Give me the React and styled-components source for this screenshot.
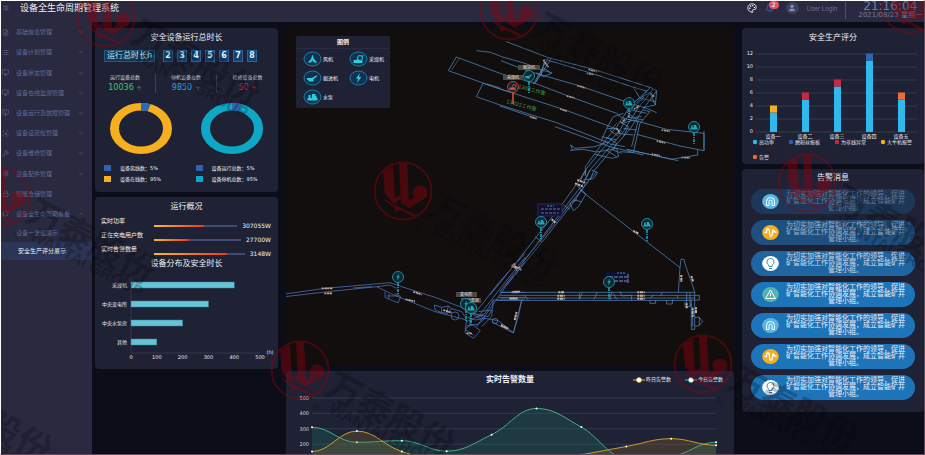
import React from "react";
import styled, { createGlobalStyle } from "styled-components";
import {
  FileSearch, List, Monitor, MonitorDot, MonitorCheck, ScanSearch, Wrench, Settings, Lock,
  RefreshCw, ChevronDown, ChevronUp, Palette, Bell, User, Menu,
} from "lucide-react";

const cjk = '"DejaVu Sans", "Noto Sans CJK SC", sans-serif';

const GlobalStyle = createGlobalStyle`
  * { box-sizing: border-box; }
  body { margin: 0; background: #0b0d18; font-family: ${cjk}; color: #f2f2f6; }
  button { border: 0; background: none; padding: 0; margin: 0; color: inherit; font: inherit; cursor: pointer; }
  a { color: inherit; text-decoration: none; }
  ul, dl, dd, h1, h2, p { margin: 0; padding: 0; font-weight: 400; }
  ul { list-style: none; }
  svg { display: block; }
  svg text { font-family: ${cjk}; }
`;

const Page = styled.div`
  position: relative;
  height: 100vh;
  overflow: hidden;
  display: flex;
  flex-direction: column;
  background: #0b0d18;
  border: 1px solid #fff;
  border-right-color: #5e4b5c;
  border-bottom-color: #5e4b5c;
`;

/* ---------- top bar ---------- */
const TopBar = styled.header`
  display: flex;
  align-items: flex-start;
  justify-content: space-between;
  flex: none;
  height: 21px;
  padding: 0 2px;
  background: #292a3f;
`;
const Brand = styled.div`
  display: flex;
  align-items: center;
  gap: 11px;
  height: 14px;
  color: #7b7f9c;
`;
const BrandTitle = styled.h1`
  font-size: 9px;
  line-height: 14px;
  color: #f0f0f5;
`;
const Tools = styled.div`
  display: flex;
  align-items: flex-start;
  height: 18px;
`;
const ToolButton = styled.button`
  position: relative;
  display: grid;
  place-items: center;
  width: 10px;
  height: 14px;
  margin-right: 8px;
  color: ${(p) => p.$color};
`;
const Badge = styled.span`
  position: absolute;
  top: 0;
  right: -4px;
  width: 10px;
  height: 8px;
  border-radius: 4px;
  background: #e0526e;
  color: #fff;
  font-size: 6px;
  line-height: 8px;
  text-align: center;
`;
const Account = styled.button`
  display: flex;
  align-items: center;
  gap: 8px;
  height: 14px;
  margin-left: 3px;
  color: #6d7191;
  font-size: 6px;
  font-family: Inter, sans-serif;
`;
const Avatar = styled.span`
  display: grid;
  place-items: center;
  width: 13px;
  height: 12px;
  border-radius: 50%;
  background: #3b4160;
  color: #8d93b0;
`;
const Clock = styled.time`
  margin-left: 8px;
  padding-left: 12px;
  height: 18px;
  border-left: 1px solid #4a4e6c;
  color: #6f7aa8;
  font-size: 7px;
  line-height: 8px;
  text-align: center;
`;
const ClockTime = styled.span`
  display: block;
  font-size: 12px;
  line-height: 10px;
`;

/* ---------- frame ---------- */
const Body = styled.div`
  display: flex;
  flex: 1;
  min-height: 0;
`;
const Sidebar = styled.nav`
  flex: none;
  width: 91px;
  background: #292a3f;
`;
const MenuList = styled.ul`
  display: flex;
  flex-direction: column;
  height: 202px;
`;
const MenuItem = styled.li`
  flex: 1;
  display: flex;
`;
const MenuButton = styled.button`
  display: grid;
  grid-template-columns: 14px 1fr 6px;
  align-items: center;
  width: 100%;
  padding: 0 8px 0 1px;
  text-align: left;
  white-space: nowrap;
  font-size: 6px;
  line-height: 8px;
  color: #656b93;
`;
const SubLink = styled.a`
  display: block;
  padding-left: ${(p) => (p.$active ? "17px" : "15px")};
  font-size: 6px;
  line-height: 18px;
  white-space: nowrap;
  color: ${(p) => (p.$active ? "#f4f4f8" : "#656b93")};
  background: ${(p) => (p.$active ? "#2c3556" : "transparent")};
`;
const Content = styled.main`
  flex: 1;
  min-width: 0;
  display: grid;
  grid-template-columns: 183fr 448fr 182fr;
  align-items: start;
  gap: 8px;
  padding: 6px 0 0 3px;
`;
const Column = styled.div`
  display: flex;
  flex-direction: column;
  gap: 5px;
  min-width: 0;
`;
const Card = styled.section`
  position: relative;
  padding: ${(p) => p.$pad || "5px 0 6px"};
  border-radius: 4px;
  background: #1f2235;
`;
const CardTitle = styled.h2`
  font-size: 8px;
  line-height: 10px;
  text-align: center;
  font-weight: ${(p) => (p.$bold ? 700 : 400)};
`;
const Drawing = styled.svg`
  width: 100%;
  height: auto;
`;

/* ---------- running time card ---------- */
const CounterRow = styled.div`
  display: flex;
  align-items: center;
  gap: 4px;
  padding: 7px 8px 0 9px;
`;
const CounterLabel = styled.span`
  margin-right: 4px;
  padding: 0 2px;
  border: 1px solid #25587e;
  background: #16365a;
  color: #b9ecf5;
  font-size: 8px;
  line-height: 10px;
  white-space: nowrap;
`;
const Digit = styled.span`
  width: 10px;
  border: 1px solid #28659a;
  background: #17406f;
  color: #d7f6fb;
  font-size: 8px;
  font-weight: 700;
  line-height: 10px;
  text-align: center;
`;
const Stats = styled.dl`
  display: grid;
  grid-template-columns: repeat(3, 1fr);
  margin-top: 12px;
`;
const Stat = styled.div`
  height: 19px;
  text-align: center;
  border-right: ${(p) => (p.$last ? "0" : "1px solid #3c4058")};
`;
const StatLabel = styled.dt`
  font-size: 5px;
  line-height: 6px;
  color: #d5d6de;
`;
const StatValue = styled.dd`
  margin-top: 3px;
  font-size: 8px;
  line-height: 10px;
  color: ${(p) => p.$color};
`;
const Unit = styled.small`
  font-size: 5px;
  margin-left: 3px;
`;
const Donuts = styled.div`
  display: grid;
  grid-template-columns: 1fr 1fr;
  padding-top: 10px;
`;
const DonutCell = styled.div`
  display: flex;
  flex-direction: column;
  align-items: center;
`;
const Ring = styled.svg`
  width: 62px;
  height: 51px;
`;
const Legend = styled.ul`
  align-self: stretch;
  margin-top: 8px;
  padding-left: 9px;
`;
const LegendItem = styled.li`
  display: flex;
  align-items: center;
  gap: 9px;
  height: 11px;
  font-size: 5px;
  white-space: nowrap;
`;
const Swatch = styled.span`
  width: 7px;
  height: 6px;
  background: ${(p) => p.$color};
`;

/* ---------- overview card ---------- */
const Meters = styled.div`
  padding: 5px 7px 0 6px;
`;
const Meter = styled.div`
  display: grid;
  grid-template-columns: 53px 1fr auto;
  column-gap: 0;
  height: 14px;
  font-size: 6px;
  line-height: 8px;
`;
const MeterLabel = styled.span`
  white-space: nowrap;
`;
const MeterTrack = styled.span`
  height: 2px;
  margin: 8px 5px 0 0;
  background: linear-gradient(90deg, #f3bd2a, #ee3a14) 0 0 / ${(p) => p.$fill}% 100% no-repeat #414c77;
`;
const MeterValue = styled.span`
  padding-top: 5px;
`;

/* ---------- map ---------- */
const MapPanel = styled.section`
  position: relative;
  background: #120e0d;
`;
const MapLegend = styled.div`
  position: absolute;
  left: 10px;
  top: 8px;
  width: 94px;
  padding-bottom: 2px;
  border-radius: 2px;
  background: #1f2235;
`;
const MapLegendTitle = styled.h2`
  font-size: 6px;
  font-weight: 700;
  line-height: 12px;
  text-align: center;
  border-bottom: 1px solid #292c42;
`;
const MapLegendGrid = styled.ul`
  display: grid;
  grid-template-columns: 46px 1fr;
  grid-auto-rows: 19px;
  padding-left: 7px;
`;
const MapLegendItem = styled.li`
  display: flex;
  align-items: center;
  gap: 1px;
  font-size: 5px;
  white-space: nowrap;
`;
const GlyphSvg = styled.svg`
  width: 19px;
  height: 16px;
  flex: none;
`;

/* ---------- alarms ---------- */
const AlarmList = styled.ul`
  display: flex;
  flex-direction: column;
  gap: 6px;
  padding: 6px 9px 0;
`;
const Alarm = styled.li`
  display: grid;
  grid-template-columns: 17px 119px;
  align-items: center;
  column-gap: 7px;
  height: 25px;
  padding-left: 11px;
  border-radius: 13px;
  background: rgba(30, 116, 185, ${(p) => p.$strength});
`;
const AlarmText = styled.p`
  font-size: 7px;
  line-height: 7px;
  text-align: center;
  color: rgba(235, 240, 248, ${(p) => p.$strength});
`;
const AlarmIcon = styled.svg`
  width: 17px;
  height: 15px;
`;

const Watermark = styled.svg`
  position: absolute;
  left: 0;
  top: 0;
  width: 100vw;
  pointer-events: none;
`;

const menu = [
  ["基础信息管理", FileSearch, 1], ["设备计划管理", List, 1], ["设备状态管理", Monitor, 1],
  ["设备在线监测管理", MonitorDot, 1], ["设备运行及故障管理", MonitorCheck, 1],
  ["设备设定检管理", ScanSearch, 1], ["设备维修管理", Wrench, 1], ["设备配件管理", Settings, 1],
  ["智能仓储管理", Lock, 0], ["设备全生命周期看板", RefreshCw, 2],
];

function Donut({ color, items }) {
  return (
    <DonutCell>
      <Ring viewBox="0 0 62 62" preserveAspectRatio="none" role="img" aria-label={items[1]}>
        <circle cx="31" cy="31" r="26.5" fill="none" stroke={color} strokeWidth="9" />
        <circle cx="31" cy="31" r="26.5" fill="none" stroke="#2a69b4" strokeWidth="9"
          pathLength="100" strokeDasharray="5 95" transform="rotate(-90 31 31)" />
      </Ring>
      <Legend>
        <LegendItem><Swatch $color="#3461ae" />{items[0]}</LegendItem>
        <LegendItem><Swatch $color={color} />{items[1]}</LegendItem>
      </Legend>
    </DonutCell>
  );
}

function RunTimeCard() {
  return (
    <Card $pad="5px 0 8px">
      <CardTitle>安全设备运行总时长</CardTitle>
      <CounterRow>
        <CounterLabel>运行总时长h</CounterLabel>
        {"2345678".split("").map((d) => <Digit key={d}>{d}</Digit>)}
      </CounterRow>
      <Stats>
        <Stat><StatLabel>运行设备总数</StatLabel><StatValue $color="#43c46f">10036<Unit>个</Unit></StatValue></Stat>
        <Stat><StatLabel>停机设备总数</StatLabel><StatValue $color="#2b9fe0">9850<Unit>个</Unit></StatValue></Stat>
        <Stat $last><StatLabel>检修设备总数</StatLabel><StatValue $color="#c62a45">50<Unit>个</Unit></StatValue></Stat>
      </Stats>
      <Donuts>
        <Donut color="#f5af1f" items={["设备离线数：5%", "设备在线数：95%"]} />
        <Donut color="#0ea8c6" items={["设备运行总数：5%", "设备停机总数：95%"]} />
      </Donuts>
    </Card>
  );
}

const distribution = [["采煤机", 400], ["中央变电所", 300], ["中央水泵房", 200], ["其他", 100]];

function OverviewCard() {
  return (
    <Card $pad="5px 0 6px">
      <CardTitle>运行概况</CardTitle>
      <Meters>
        {[["实时功率", 60, "307055W"], ["正在充电用户数", 40, "27700W"], ["实时告警数量", 80, "3148W"]].map(([l, f, v]) => (
          <Meter key={l}>
            <MeterLabel>{l}</MeterLabel><MeterTrack $fill={f} /><MeterValue>{v}</MeterValue>
          </Meter>
        ))}
      </Meters>
      <CardTitle>设备分布及安全时长</CardTitle>
      <Drawing viewBox="0 0 183 94" role="img" aria-label="设备分布及安全时长">
        <path d="M36 7V84H165" fill="none" stroke="#34374a" />
        {distribution.map(([name, v], i) => (
          <g key={name}>
            <text x="32" y={18 + i * 19} fontSize="5" fill="#e6e6ec" textAnchor="end">{name}</text>
            <rect x="36" y={13 + i * 19} width={(v / 500) * 129} height="6" fill="#65c5d8" stroke="#3c8592" strokeWidth=".5" />
          </g>
        ))}
        {[0, 100, 200, 300, 400, 500].map((v) => (
          <text key={v} x={36 + (v / 500) * 129} y="90" fontSize="5" fill="#e6e6ec" textAnchor="middle">{v}</text>
        ))}
        <text x="175" y="85" fontSize="5" fill="#e6e6ec" textAnchor="middle">(h)</text>
      </Drawing>
    </Card>
  );
}

/* Equipment symbols, drawn around 0,0 in an 18 x 14 field. */
function Symbol({ kind }) {
  switch (kind) {
    case "fan":
      return <path d="M0-4.500L1.500 0L5 3.500H1.500L0 1.500L-1.500 3.500H-5L-1.500 0Z" />;
    case "cutter":
      return <g><path d="M-5 1L0 .5L2 2L4 1V4H-5Z" /><circle cx="1.500" cy="-1" r="2.500" fill="none" stroke="currentColor" /><path d="M3-2L5-4" stroke="currentColor" /></g>;
    case "digger":
      return <path d="M-5.500 0H-1L5-3L4-1L1 1V3.500H-4V2H-5.500Z" />;
    case "bolt":
      return <path d="M1.500-5L-2.500 .5H-.3L-1.500 5L2.800-1H.5Z" />;
    default:
      return <path d="M-5 3.500V1H-4V-2H-2V1H-.5V-3H3V-1H4V1H5V3.500Z" />;
  }
}

function MapGlyph({ kind }) {
  return (
    <GlyphSvg viewBox="-9.500 -8 19 16" aria-hidden="true">
      <ellipse rx="8.500" ry="7" fill="#123150" stroke="#1c7fa5" />
      <g fill="#27d0dd" color="#27d0dd"><Symbol kind={kind} /></g>
    </GlyphSvg>
  );
}

function Pin({ x, y, kind, color = "#20a9bd" }) {
  return (
    <g transform={`translate(${x} ${y})`}>
      <path d="M0 6V17" stroke={color} strokeWidth="1.500" strokeDasharray={kind === "cutter" ? "none" : "3 1 1 1"} />
      <circle r="5.500" fill="#0d2833" stroke={color} strokeWidth=".8" />
      <g fill={color} color={color} transform="scale(.7)"><Symbol kind={kind} /></g>
    </g>
  );
}

const tagText = { fontSize: 4, fill: "#e6e0dc", textAnchor: "middle" };

function MineMap() {
  return (
    <Drawing viewBox="286 28 448 338" role="img" aria-label="巷道图">
      <g fill="none" stroke="#4f8cc4" strokeLinejoin="round" strokeWidth="2.200">
        {/* upper working faces */}
        <g transform="translate(500 20) scale(.33333)">
          <path d="M19 65L145 113L280 148L390 183L455 204L470 212L466 255L430 262" />
          <path d="M145 121L275 160L410 205L440 213M-70 92L-28 97L5 110L75 130L125 150L155 158" />
          <path d="M3 122L80 152L240 198L385 248L440 265L470 278" />
          <path d="M-155 152L-131 111L0 160L105 190L210 230L350 280L365 293L412 305" />
          <path d="M-155 152L0 207L190 268L310 312L365 333" />
          <path d="M-71 230L-51 190L-20 200L30 216M-71 230L0 255L170 308L330 370M165 320L330 380L430 405M0 258L100 292" />
          <path d="M-40 191L0 203M-145 150L-122 115" stroke="#57626b" />
          <path d="M145 113L100 192M152 118L108 186M135 117L122 168M105 190L130 144L155 160L130 170L108 158" />
          <path d="M450 203L400 260L360 330L305 390L258 448L242 480M460 207L410 270L370 335L318 394L270 450L255 480M470 212L428 270L388 330L330 395L280 455L270 480M440 213L390 260L350 320L300 380L256 440V465" />
          <path d="M402 205L420 235L466 245M410 240L450 218L466 255M395 270L440 280M387 292L430 300M370 325L410 330M350 340L400 345M330 372L375 380M318 390L350 410M305 350L350 360M410 252L432 232" />
          <path d="M430 270L450 275L420 310L400 398L360 395M415 300L395 380M340 290L320 325L303 365M340 290L370 280M320 325L355 327" />
          <path d="M375 308L400 300L500 328L612 340V392L540 378L410 343M612 333V392M593 390V405L515 418L380 388M380 388L535 422" />
          <path d="M212 375L225 385L285 380L325 365M210 391L250 388L290 396L350 385L356 410L335 415L285 403M212 375L218 391" />
          <path d="M320 352L350 370L338 390L365 400M360 305L385 320L370 350M380 275L400 292L425 290M355 348L330 332L350 310" />
          <g stroke="#a8998e" strokeWidth="5" strokeDasharray="5 2 8 1">
            <path d="M265 148L290 155M260 160L282 164M232 197L256 204M200 228L224 234M180 267L202 274M90 290L110 296M485 330L510 334M470 363L496 369M455 402L480 407M545 412L570 414M130 120L145 142M402 267L418 258M350 325L360 340M365 310L374 298M452 220L462 230" />
          </g>
        </g>
        {/* diagonal roadway and lower right faces */}
        <g transform="translate(500 170) scale(.33333)" stroke="#5388c2">
          <path d="M257 0L235 35L190 98L45 282L-30 375M270 0L250 40L200 105L62 285L0 365M290 5L258 40L220 98L135 205L20 345M265 35L220 90L160 165L70 275M258 0L255 18M275 0L293 8L280 26L250 30" />
          <path d="M232 48L258 72L235 110L220 122L210 100L232 88M220 90L245 95M105 200L125 215M155 145L170 158M190 105L210 118" />
          <path d="M240 60L405 188L540 293L543 268L552 268L556 285L584 365M540 293L535 367" />
          <path d="M0 367H585M0 376H582M0 384H585M-10 391H574M65 391L40 489L-25 455" />
          <path d="M584 365V478H574V390H598V376H584M450 391V400H467V390M500 391V402H517V388M555 395V410H572V400M585 442H598L608 455L595 468H585M598 442V468" />
          <path d="M72 375L85 390M238 370V388L247 367M282 388L292 367M335 365L330 390M360 365L365 378L395 376V390M340 370L350 388M450 384L462 375M480 376L490 367M530 376L535 385M560 367V410M570 367V410M578 410V470" />
          <g stroke="#c3b4a8" strokeWidth="6" strokeDasharray="6 2 9 2">
            <path d="M35 367H56M28 385H52M175 367H194M172 377H194M172 386H194M412 367H434M412 377H434M412 386H434M225 40L250 50M232 30L255 38M35 290L62 295M42 280L50 302M400 183L415 190M155 148L165 158M544 315V336M574 318L580 336M560 400V415M588 412V430M3 465L22 474M44 450L50 425M578 415V440" />
          </g>
        </g>
        {/* lower left roadway */}
        <g transform="translate(285 170) scale(.33333)" stroke="#5079c4">
          <path d="M0 372L120 355L315 338L350 350L450 382L530 412L565 430M0 380L120 366L275 350L320 372L450 425L545 450M275 350L315 345L335 355M205 354L260 350" />
          <path d="M300 365V382L325 393L340 398L347 380L330 370M305 378H340M312 372V386" />
          <path d="M448 405L470 412L490 408L500 416L488 430L470 428L450 420ZM470 412V428M490 408L485 430M500 416L530 425L540 440" />
          <circle cx="510" cy="438" r="12" /><circle cx="630" cy="453" r="8" />
          <path d="M545 450L540 488L565 505L586 482L560 462L540 478L565 495M545 468L580 462L600 445L570 450L545 440M560 430L610 440L620 420L580 425M530 412L600 445L640 452L685 488L700 440L710 391" />
          <path d="M570 430L640 340L720 250M580 440L650 350L720 262M595 445L665 345L720 275M600 430L625 390H720M625 390L620 440L590 470M640 382H720M650 367H720M548 425L590 448L575 470M545 455L600 430M555 440V465" />
          <g stroke="#b8aaa2" strokeWidth="5" strokeDasharray="6 2 8 1">
            <path d="M110 355H142M118 370H143M385 365L410 374M362 388L390 394M475 420L500 428M545 490H560M650 468L670 476M680 285L710 300M685 365H705M675 386H700" />
          </g>
        </g>
      </g>
      {/* data boxes beside the pins */}
      <g>
        <rect x="538" y="204" width="24" height="12" fill="#10112f" stroke="#282a58" />
        <path d="M541 209H560M541 213H559" stroke="#696c91" strokeDasharray="3 1" />
        <path d="M547 206H554" stroke="#2698c0" strokeDasharray="2 1" />
        <rect x="606" y="272" width="23" height="11" fill="#10112f" />
        <path d="M609 277H627M609 281H627M628 274V283" stroke="#8c86a8" strokeDasharray="4 1" />
        <path d="M617 273H626" stroke="#2698c0" strokeDasharray="2 1" />
      </g>
      <g fill="#4b4846">
        <rect x="518" y="65" width="22" height="5" /><rect x="503" y="75" width="20" height="5" />
        <rect x="456" y="292" width="21" height="5" /><rect x="461" y="298" width="20" height="5" />
      </g>
      <text x="529" y="69" {...tagText}>掘进机</text>
      <text x="513" y="79" {...tagText}>采煤机</text>
      <text x="466" y="296" {...tagText}>变电所</text>
      <text x="473" y="302" {...tagText}>水泵房</text>
      <g fill="#3f9d4c" fontSize="5">
        <text x="518" y="88" transform="rotate(15 518 88)">1302工作面</text>
        <text x="506" y="103" transform="rotate(15 506 103)">13022工作面</text>
      </g>
      <Pin x={529} y={76} kind="digger" />
      <Pin x={513} y={87} kind="cutter" color="#e0523c" />
      <Pin x={629} y={103} kind="pump" />
      <Pin x={694} y={127} kind="pump" />
      <Pin x={541} y={222} kind="pump" />
      <Pin x={647} y={224} kind="pump" />
      <Pin x={609} y={282} kind="bolt" />
      <Pin x={398} y={277} kind="bolt" />
      <Pin x={466} y={304} kind="bolt" />
      <Pin x={471} y={308} kind="pump" />
    </Drawing>
  );
}

const yesterday = [152, 285, 152, 95, 80, 85, 132, 185, 236, 193];
const today = [310, 212, 223, 155, 262, 432, 311, 112, 118, 213];

function smooth(values) {
  const pts = values.map((v, i) => [26 + i * 44.9, 86 - v * 0.154]);
  let d = `M${pts[0]}`;
  for (let i = 0; i < pts.length - 1; i++) {
    const [a, b, c, e] = [pts[i - 1] || pts[i], pts[i], pts[i + 1], pts[i + 2] || pts[i + 1]];
    const flatB = (b[1] - a[1]) * (c[1] - b[1]) <= 0 ? 0 : (c[1] - a[1]) / 5;
    const flatC = (c[1] - b[1]) * (e[1] - c[1]) <= 0 ? 0 : (e[1] - b[1]) / 5;
    d += `C${b[0] + 18},${b[1] + flatB} ${c[0] - 18},${c[1] - flatC} ${c}`;
  }
  return { d, pts };
}

function Series({ values, color, fill }) {
  const { d, pts } = smooth(values);
  return (
    <g>
      <path d={`${d}V86H26Z`} fill={fill} />
      <path d={d} fill="none" stroke={color} />
      {pts.map(([x, y]) => <circle key={x} cx={x} cy={y} r="1" fill="#fff" />)}
    </g>
  );
}

const ChartKey = styled.div`
  position: absolute;
  top: 5px;
  right: 11px;
  display: flex;
  gap: 14px;
`;
const KeyItem = styled.span`
  display: flex;
  align-items: center;
  gap: 1px;
  font-size: 5px;
  line-height: 7px;
`;

function AlarmChart() {
  return (
    <Card $pad="4px 0 6px">
      <CardTitle $bold>实时告警数量</CardTitle>
      <Drawing viewBox="0 -4 448 97" role="img" aria-label="实时告警数量">
        {[500, 400, 300, 200].map((v) => (
          <g key={v}>
            <path d={`M26 ${86 - v * 0.154}H430`} stroke="#333950" />
            <text x="23" y={88 - v * 0.154} fontSize="5" fill="#d5d6de" textAnchor="end">{v}</text>
          </g>
        ))}
        <Series values={today} color="#3fae83" fill="rgba(32,120,100,.28)" />
        <Series values={yesterday} color="#cf9a2c" fill="rgba(160,120,40,.24)" />
      </Drawing>
      <ChartKey>
        {[["昨日告警数", "#f5af1f"], ["今日告警数", "#3fc79a"]].map(([t, c]) => (
          <KeyItem key={t}>
            <svg width="12" height="6" aria-hidden="true">
              <path d="M0 3H12" stroke={c} /><circle cx="6" cy="3" r="2.500" fill="#fff" stroke={c} strokeWidth=".5" />
            </svg>
            {t}
          </KeyItem>
        ))}
      </ChartKey>
    </Card>
  );
}

const scores = [
  ["设备一", 3, "#f5af1f"], ["设备二", 5, "#c42a45"], ["设备三", 7, "#c42a45"], ["设备四", 11, "#3461ae"], ["设备五", 5, "#ee6b35"],
];
const scoreKeys = [
  [12, 101, "#2fbdf0", "高功率"], [48, 101, "#3461ae", "磨粉丝报板"], [94, 101, "#c42a45", "为非线异常"],
  [140, 101, "#f5af1f", "大牛机报警"], [12, 116, "#ee6b35", "告警"],
];

function ScoreCard() {
  return (
    <Card $pad="5px 0 0">
      <CardTitle>安全生产评分</CardTitle>
      <Drawing viewBox="0 3 182 121" role="img" aria-label="安全生产评分">
        {[0, 2, 4, 6, 8, 10, 12].map((v) => (
          <g key={v}>
            <path d={`M14 ${92 - v * 6.5}H175`} stroke="#343950" />
            <text x="11" y={93 - v * 6.5} fontSize="5" fill="#e6e6ec" textAnchor="end">{v}</text>
          </g>
        ))}
        {scores.map(([name, v, c], i) => (
          <g key={name}>
            <rect x={28 + i * 32} y={92 - v * 6.5} width="7" height={v * 6.5} fill="#2fb9ec" />
            <rect x={28 + i * 32} y={85 - v * 6.5} width="7" height="7" fill={c} />
            <text x={31 + i * 32} y="98" fontSize="5" fill="#e6e6ec" textAnchor="middle">{name}</text>
          </g>
        ))}
        {scoreKeys.map(([x, y, c, t]) => (
          <g key={t}>
            <circle cx={x + 1} cy={y + 1} r="2.200" fill={c} />
            <text x={x + 5} y={y + 3} fontSize="5" fill="#e6e6ec">{t}</text>
          </g>
        ))}
      </Drawing>
    </Card>
  );
}

const alarmArt = {
  magnet: { bg: "#5ab6e3", art: <path d="M-4 4V0A4 4 0 0 1 4 0V4M-1.500 4V0A1.500 1.500 0 0 1 1.500 0V4M-4 4H-1.500M1.500 4H4" /> },
  wave: { bg: "#f5ae1d", art: <path d="M-6 0H-4C-4-5-1-5-1 0S2 5 2 0S4-1 4-.5H6" strokeWidth="1.300" /> },
  bulb: { bg: "#ffffff", stroke: "#2784c4", art: <path d="M-1.500 3V2C-5-.5-3.500-5 0-5S5-.5 1.500 2V3ZM-1.500 5H1.500" /> },
  warn: { bg: "#52b5b4", art: <path d="M0-4.500L5 4H-5ZM0-1.500V1.500M0 2.500V3" /> },
};
const alarms = [["magnet", 0.27, 0.35], ["wave", 0.55, 0.6], ["bulb", 0.82, 0.85], ["warn", 1, 1], ["magnet", 1, 1], ["wave", 1, 1], ["bulb", 1, 1]];

function AlarmCard() {
  return (
    <Card $pad="4px 0 12px">
      <CardTitle>告警消息</CardTitle>
      <AlarmList>
        {alarms.map(([kind, bg, fg], i) => (
          <Alarm key={i} $strength={bg}>
            <AlarmIcon viewBox="-8.500 -7.500 17 15" aria-hidden="true">
              <ellipse rx="8.300" ry="7.500" fill={alarmArt[kind].bg} />
              <g fill="none" stroke={alarmArt[kind].stroke || "#fff"}>{alarmArt[kind].art}</g>
            </AlarmIcon>
            <AlarmText $strength={fg}>为切实加强对智能化工作的领导，促进矿智能化工作协调发展，成立智能矿井管理小组。</AlarmText>
          </Alarm>
        ))}
      </AlarmList>
    </Card>
  );
}

const marks = [[105, 17], [508, 10], [909, 3], [0, 196], [402, 190], [806, 182], [299, 369], [702, 363], [-104, 375]];

function BrandWatermark() {
  return (
    <Watermark viewBox="0 0 925 455" aria-hidden="true">
      {marks.map(([x, y]) => (
        <g key={`${x},${y}`} transform={`translate(${x} ${y})`}>
          <g fill="#96000c" opacity=".42">
            <circle r="28.500" fill="none" stroke="#96000c" strokeWidth="2" />
            <path d="M-20-20L-10-25L-8 7L-2 4V8L-9 13L-18 3Z" />
            <path d="M-4-28L4-28L6 10L15 4L21 8L6 17L-2 12Z" />
            <circle cx="17" cy="2" r="7.500" />
            <path d="M-18 8L-8 14L13 24L11 26L-3 19L-8 21L-9 16L-18 10Z" />
          </g>
          <g fill="#04050a" opacity=".25" fontWeight="700">
            <text x="11" y="40" fontSize="9">®</text>
            <text fontSize="35" transform="translate(23 23) rotate(28)">万泰股份</text>
            <text fontSize="16" transform="translate(28 42) rotate(28)" style={{ fontFamily: '"Liberation Sans", sans-serif' }}>WANTAI GROUP</text>
          </g>
        </g>
      ))}
    </Watermark>
  );
}

export default function App() {
  return (
    <Page>
      <GlobalStyle />
      <TopBar>
        <Brand><Menu size={6} /><BrandTitle>设备全生命周期管理系统</BrandTitle></Brand>
        <Tools>
          <ToolButton $color="#fff" aria-label="主题"><Palette size={10} /></ToolButton>
          <ToolButton $color="#2f6bd0" aria-label="通知"><Bell size={10} /><Badge>2</Badge></ToolButton>
          <Account><Avatar><User size={8} fill="currentColor" /></Avatar>User Login</Account>
          <Clock><ClockTime>21:16:04</ClockTime>2021/08/23 星期一</Clock>
        </Tools>
      </TopBar>
      <Body>
        <Sidebar>
          <MenuList>
            {menu.map(([label, Icon, arrow]) => (
              <MenuItem key={label}>
                <MenuButton>
                  <Icon size={7} /><span>{label}</span>
                  {arrow === 1 && <ChevronDown size={6} />}
                  {arrow === 2 && <ChevronUp size={6} />}
                </MenuButton>
              </MenuItem>
            ))}
          </MenuList>
          <SubLink href="#map">设备一张图展示</SubLink>
          <SubLink href="#score" $active>安全生产评分展示</SubLink>
        </Sidebar>
        <Content>
          <Column><RunTimeCard /><OverviewCard /></Column>
          <Column>
            <MapPanel>
              <MineMap />
              <MapLegend>
                <MapLegendTitle>图例</MapLegendTitle>
                <MapLegendGrid>
                  {[["fan", "风机"], ["cutter", "采煤机"], ["digger", "掘进机"], ["bolt", "电机"], ["pump", "水泵"]].map(([k, t]) => (
                    <MapLegendItem key={k}><MapGlyph kind={k} />{t}</MapLegendItem>
                  ))}
                </MapLegendGrid>
              </MapLegend>
            </MapPanel>
            <AlarmChart />
          </Column>
          <Column><ScoreCard /><AlarmCard /></Column>
        </Content>
      </Body>
      <BrandWatermark />
    </Page>
  );
}
